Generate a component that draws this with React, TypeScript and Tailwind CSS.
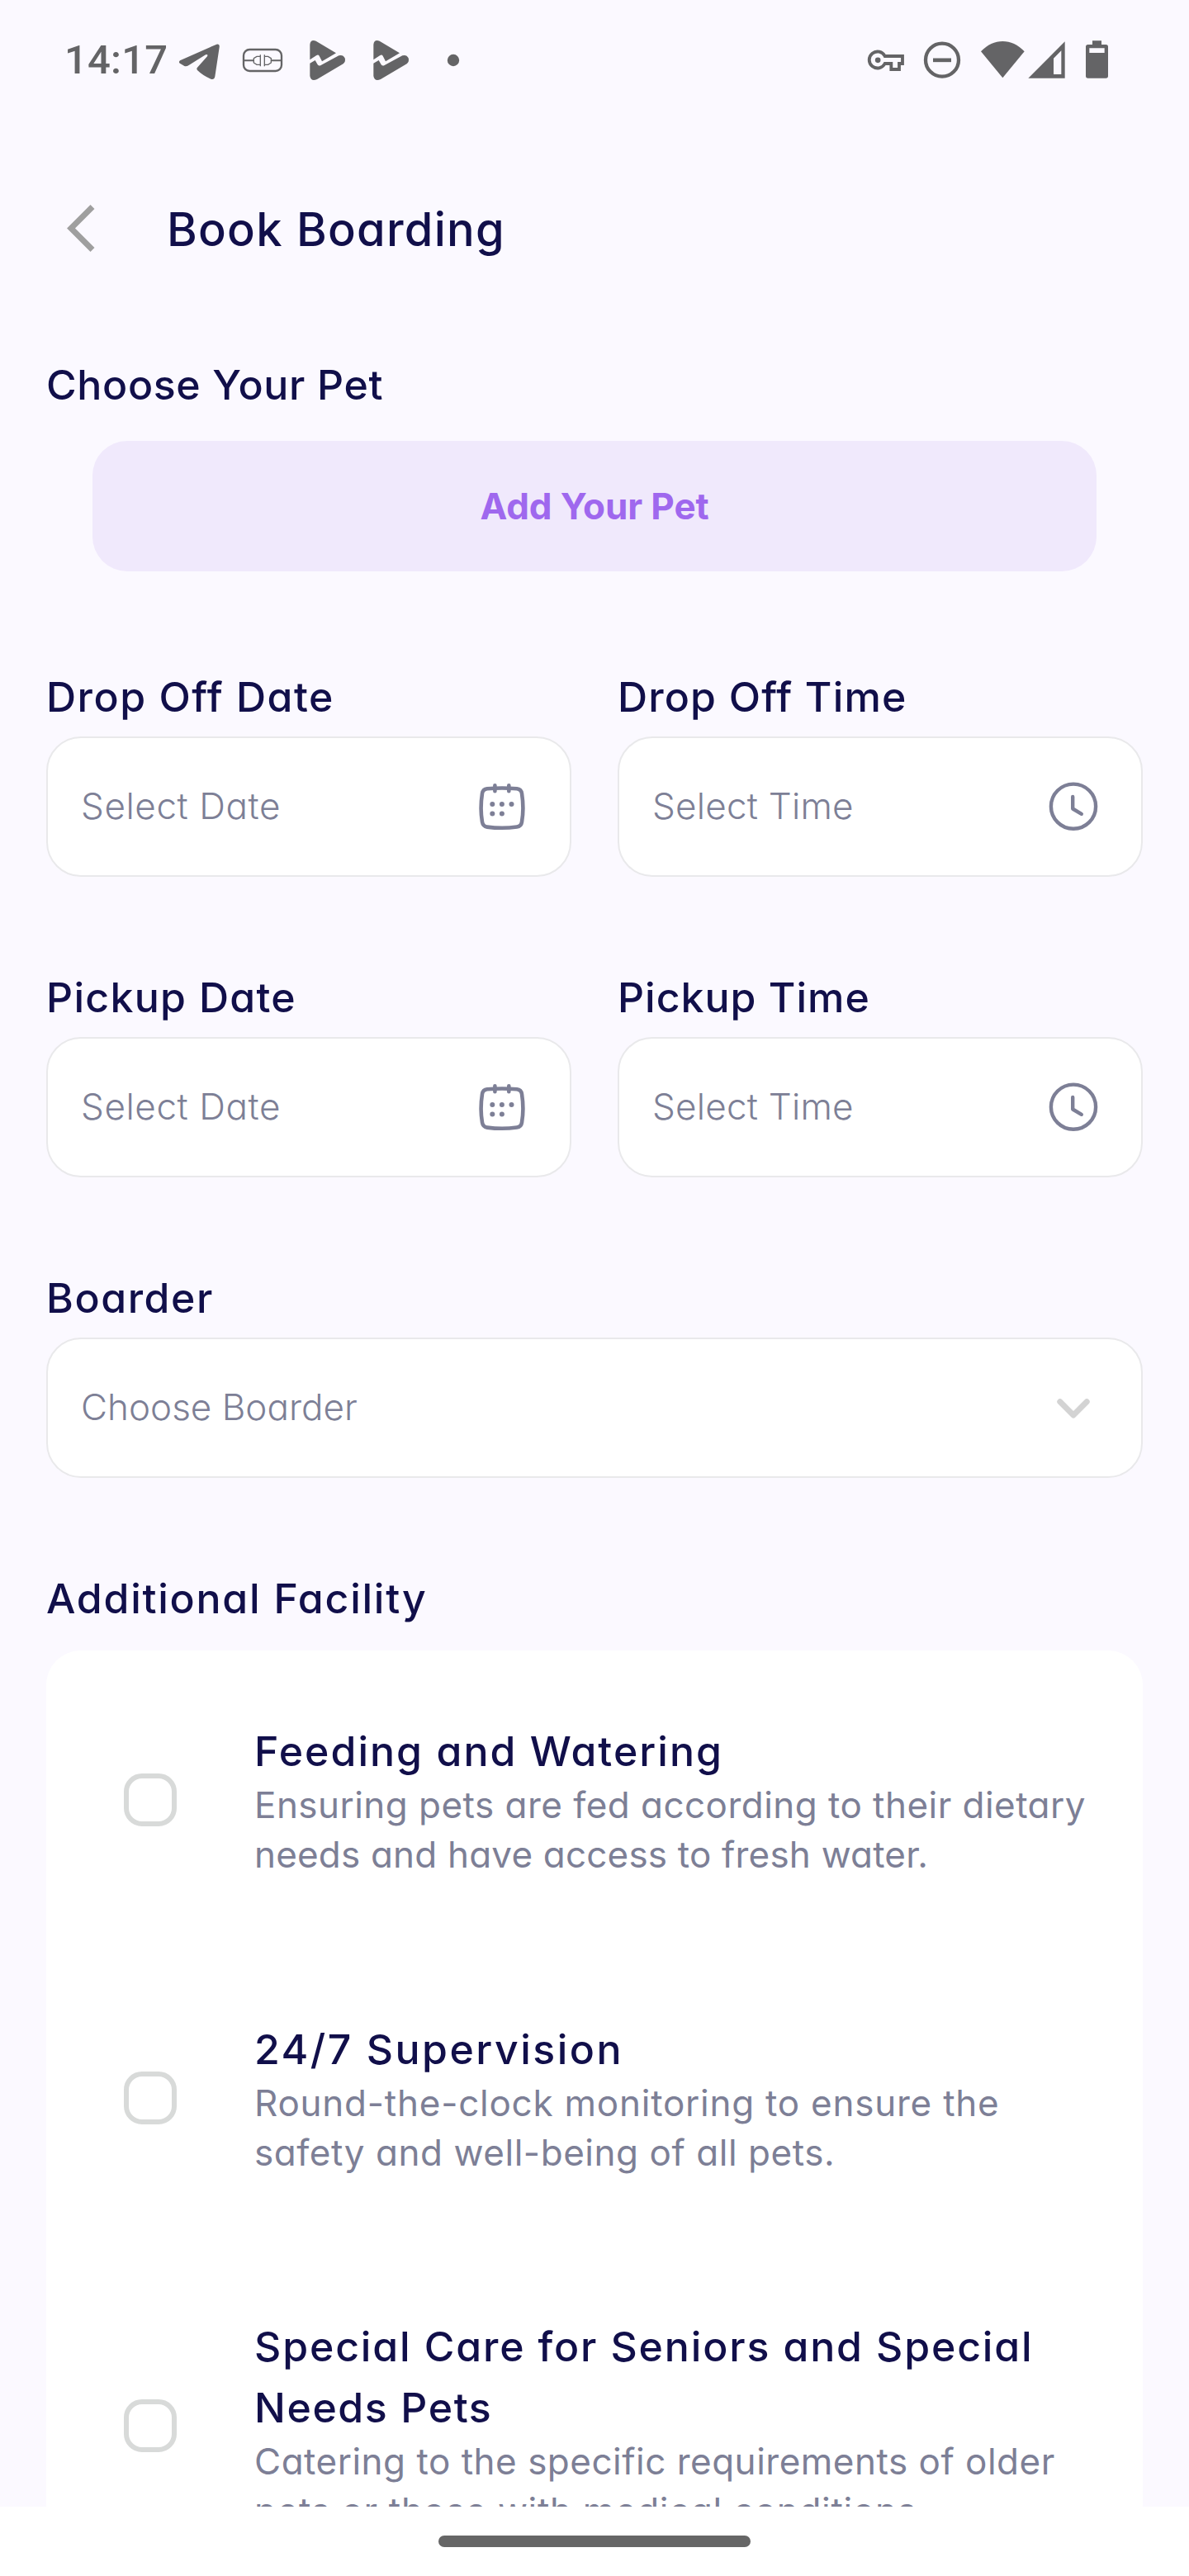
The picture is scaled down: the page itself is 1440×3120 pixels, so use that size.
import type { ReactNode } from "react";

type IconProps = { className?: string };

function TelegramIcon({ className = "" }: IconProps) {
  return (
    <svg className={`h-[60px] w-[54px] ${className}`} viewBox="462 39 162 180" fill="currentColor">
      <path d="M474 130 L607 71 Q619 69 617 82 L601 188 Q598 201 586 197 Q556 184 537 165 Q533 160 537 155 L573 115 Q577 106 567 109 L506 147 Q498 152 490 150 L475 141 Q467 136 474 130Z" />
    </svg>
  );
}

function PlugIcon({ className = "" }: IconProps) {
  return (
    <svg className={`h-[60px] w-[50px] ${className}`} viewBox="699 39 150 180" fill="none" stroke="currentColor">
      <rect x="705" y="90" width="138" height="78" rx="22" strokeWidth="7" />
      <path d="M705 130H741M806 130H842" strokeWidth="6" />
      <path d="M766 109V151M781 109V151" strokeWidth="4" />
      <path d="M766 115H753L742 122V138L753 145H766M781 115H794L805 122V138L794 145H781" strokeWidth="4" />
    </svg>
  );
}

function PlayIcon({ className = "" }: IconProps) {
  return (
    <svg className={`h-[60px] w-[46px] ${className}`} viewBox="942 39 138 180" fill="currentColor">
      <path d="M946 72 Q948 52 968 59 L1041 103 L990 133 L980 113 Q976 107 969 112 L946 127Z" />
      <path d="M946 140 L965 129 L974 145 Q979 151 986 147 L1051 112 Q1066 107 1073 121 Q1077 134 1067 142 L972 198 Q950 208 946 186Z" />
    </svg>
  );
}

function DotIcon({ className = "" }: IconProps) {
  return (
    <svg className={`h-[60px] w-[18px] ${className}`} viewBox="1440 39 54 180" fill="currentColor">
      <circle cx="1467" cy="129" r="21.5" />
    </svg>
  );
}

function KeyIcon({ className = "" }: IconProps) {
  return (
    <svg className={`h-[60px] w-[46px] ${className}`} viewBox="60 39 138 180" fill="none" stroke="currentColor" strokeWidth="11.5">
      <path d="M125 114H189V141H177V162H148V141H125A30 30 0 1 1 125 114Z" />
      <circle cx="99.500" cy="128.500" r="10" fill="currentColor" stroke="none" />
    </svg>
  );
}

function DoNotDisturbIcon({ className = "" }: IconProps) {
  return (
    <svg className={`h-[60px] w-[46px] ${className}`} viewBox="264 39 138 180" fill="none" stroke="currentColor">
      <circle cx="333" cy="128" r="60" strokeWidth="13" />
      <path d="M300 128.500H366" strokeWidth="14" />
    </svg>
  );
}

function WifiIcon({ className = "" }: IconProps) {
  return (
    <svg className={`h-[60px] w-[55px] ${className}`} viewBox="471 39 165 180" fill="currentColor">
      <path d="M553 193L474 97C520 48 586 48 632 97Z" />
    </svg>
  );
}

function SignalIcon({ className = "" }: IconProps) {
  return (
    <svg className={`h-[60px] w-[46px] ${className}`} viewBox="645 39 138 180" fill="currentColor">
      <path fillRule="evenodd" d="M646 194L779 61V194ZM738 122V180H766V94Z" />
    </svg>
  );
}

function BatteryIcon({ className = "" }: IconProps) {
  return (
    <svg className={`h-[60px] w-[29px] ${className}`} viewBox="852 39 87 180" fill="currentColor">
      <path
        fillRule="evenodd"
        d="M879 58H912V72H928Q936 72 936 80V186Q936 194 928 194H863Q855 194 855 186V80Q855 72 863 72H879ZM868 85V102H923V85Z"
      />
    </svg>
  );
}

function BackIcon() {
  return (
    <svg className="h-[60px] w-[34px]" viewBox="0 0 34 60" fill="none" stroke="#9f9f9f" strokeWidth="7">
      <path d="M31 3.500L5 29.500L31 55.500" />
    </svg>
  );
}

function CalendarIcon() {
  return (
    <svg className="size-[60px]" viewBox="0 0 60 60" fill="none" stroke="#7d7f96" strokeWidth="4.600" strokeLinecap="round">
      <path d="M12 8.200Q30 6.800 48 8.200Q53.200 8.800 54 14Q56.800 32 54 48.500Q53.200 53.800 48 54.600Q30 57 12 54.600Q6.800 53.800 6 48.500Q3.200 32 6 14Q6.800 8.800 12 8.200Z" />
      <path d="M21.400 4.300V11.200M38.300 4.300V11.200" />
      <g fill="#7d7f96" stroke="none">
        <circle cx="18.300" cy="27" r="3" />
        <circle cx="29.900" cy="27" r="3" />
        <circle cx="41.500" cy="27" r="3" />
        <circle cx="18.300" cy="38.600" r="3" />
        <circle cx="29.900" cy="38.600" r="3" />
      </g>
    </svg>
  );
}

function ClockIcon() {
  return (
    <svg className="size-[60px]" viewBox="0 0 60 60" fill="none" stroke="#7d7f96" strokeWidth="4.400" strokeLinecap="round" strokeLinejoin="round">
      <circle cx="30" cy="29.700" r="27.100" />
      <path d="M29.200 18V32.500L39.800 38.800" />
    </svg>
  );
}

function ChevronDownIcon() {
  return (
    <svg className="size-[60px]" viewBox="0 0 60 60" fill="none" stroke="#d3d3d3" strokeWidth="7" strokeLinecap="round" strokeLinejoin="round">
      <path d="M13.800 22.800L30 39L46.200 22.800" />
    </svg>
  );
}

function Label({ children, className }: { children: ReactNode; className: string }) {
  return <div className={`text-[50px] leading-[60px] font-medium whitespace-nowrap ${className}`}>{children}</div>;
}

type FieldProps = {
  label: string;
  labelClass: string;
  placeholder: string;
  placeholderClass: string;
  icon: ReactNode;
};

function Field({ label, labelClass, placeholder, placeholderClass, icon }: FieldProps) {
  return (
    <div>
      <Label className={labelClass}>{label}</Label>
      <button className="mt-[18px] flex h-[170px] w-full items-center justify-between rounded-[42px] border-2 border-[#e9e9eb] bg-white pr-[52px] pl-10">
        <span className={`pb-[2px] text-[44px] leading-[53px] font-light whitespace-nowrap text-[#7d7f96] ${placeholderClass}`}>
          {placeholder}
        </span>
        {icon}
      </button>
    </div>
  );
}

type FacilityProps = {
  title: { text: string; className: string }[];
  description: { text: string; className: string }[];
};

function Facility({ title, description }: FacilityProps) {
  return (
    <div className="flex items-center gap-[94px] pl-[94px]">
      <span className="size-16 shrink-0 rounded-[22px] border-[6px] border-[#d8dad9]" />
      <div className="whitespace-nowrap">
        <h3 className="text-[50px] leading-[74px] font-medium">
          {title.map((line) => (
            <span key={line.text} className={`block ${line.className}`}>
              {line.text}
            </span>
          ))}
        </h3>
        <p className="-mt-[2px] text-[44px] leading-[60px] text-[#7d7f96]">
          {description.map((line) => (
            <span key={line.text} className={`block ${line.className}`}>
              {line.text}
            </span>
          ))}
        </p>
      </div>
    </div>
  );
}

const facilities: FacilityProps[] = [
  {
    title: [{ text: "Feeding and Watering", className: "tracking-[2.02px]" }],
    description: [
      { text: "Ensuring pets are fed according to their dietary", className: "tracking-[0.46px]" },
      { text: "needs and have access to fresh water.", className: "tracking-[0.19px]" },
    ],
  },
  {
    title: [{ text: "24/7 Supervision", className: "tracking-[2.5px]" }],
    description: [
      { text: "Round-the-clock monitoring to ensure the", className: "tracking-[0.76px]" },
      { text: "safety and well-being of all pets.", className: "tracking-[0.55px]" },
    ],
  },
  {
    title: [
      { text: "Special Care for Seniors and Special", className: "tracking-[1.85px]" },
      { text: "Needs Pets", className: "tracking-[1.6px]" },
    ],
    description: [
      { text: "Catering to the specific requirements of older", className: "tracking-[0.5px]" },
      { text: "pets or those with medical conditions.", className: "tracking-[0.67px]" },
    ],
  },
];

export default function App() {
  return (
    <div className="flex h-[3120px] w-[1440px] flex-col overflow-hidden bg-[#fbf9ff] font-['Inter',sans-serif] text-[#110f4a] [font-feature-settings:'cv11']">
      <div className="flex h-[146px] shrink-0 items-center justify-between pr-[97px] pl-[78px] text-[#646466]">
        <div className="flex items-center">
          <span className="w-[136px] font-['Roboto',sans-serif] text-[49px] leading-[60px] font-medium tracking-[0.2px]">14:17</span>
          <TelegramIcon />
          <PlugIcon className="ml-[25px]" />
          <PlayIcon className="ml-[31px]" />
          <PlayIcon className="ml-[31px]" />
          <DotIcon className="ml-[43px]" />
        </div>
        <div className="flex items-center">
          <KeyIcon />
          <DoNotDisturbIcon className="ml-[22px]" />
          <WifiIcon className="ml-[23px]" />
          <SignalIcon className="ml-[3px]" />
          <BatteryIcon className="ml-[23px]" />
        </div>
      </div>

      <header className="flex h-[262px] shrink-0 items-center pl-[81px]">
        <BackIcon />
        <h1 className="ml-[87px] pt-[2px] text-[56px] leading-[68px] font-medium tracking-[1.26px]">Book Boarding</h1>
      </header>

      <main className="min-h-0 flex-1 overflow-hidden px-14 pt-7">
        <Label className="tracking-[0.65px]">Choose Your Pet</Label>
        <button className="mx-14 mt-[38px] flex h-[158px] w-[1216px] items-center justify-center rounded-[42px] bg-[#f0e9fc] text-[44px] leading-[53px] font-bold tracking-[-0.1px] text-[#9f68ee]">
          Add Your Pet
        </button>

        <div className="mt-[122px] grid grid-cols-2 gap-x-14 gap-y-[116px]">
          <Field label="Drop Off Date" labelClass="tracking-[1.5px]" placeholder="Select Date" placeholderClass="tracking-[0.59px]" icon={<CalendarIcon />} />
          <Field label="Drop Off Time" labelClass="tracking-[1.15px]" placeholder="Select Time" placeholderClass="tracking-[0.22px]" icon={<ClockIcon />} />
          <Field label="Pickup Date" labelClass="tracking-[1.3px]" placeholder="Select Date" placeholderClass="tracking-[0.59px]" icon={<CalendarIcon />} />
          <Field label="Pickup Time" labelClass="tracking-[1px]" placeholder="Select Time" placeholderClass="tracking-[0.22px]" icon={<ClockIcon />} />
          <div className="col-span-2">
            <Field label="Boarder" labelClass="tracking-[1.56px]" placeholder="Choose Boarder" placeholderClass="tracking-[0.01px]" icon={<ChevronDownIcon />} />
          </div>
        </div>

        <Label className="mt-[116px] tracking-[1.75px]">Additional Facility</Label>
        <section className="mt-[33px] flex flex-col gap-[168.5px] rounded-t-[42px] bg-white pt-[85px]">
          {facilities.map((facility) => (
            <Facility key={facility.title[0].text} {...facility} />
          ))}
        </section>
      </main>

      <footer className="flex h-[84px] shrink-0 justify-center bg-white pt-[35px]">
        <span className="h-[14px] w-[378px] rounded-full bg-[#666666]" />
      </footer>
    </div>
  );
}
